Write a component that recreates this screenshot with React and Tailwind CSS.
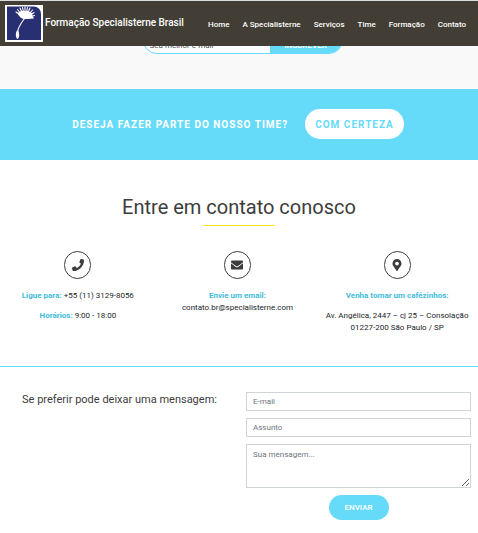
import { FaPhone, FaEnvelope, FaMapMarkerAlt } from "react-icons/fa";

const links = ["Home", "A Specialisterne", "Serviços", "Time", "Formação", "Contato"];

function Logo() {
  const seeds = [
    [11, 7], [12.5, 4.5], [15, 3], [17.5, 2.5], [20, 2], [22.5, 2.5], [25, 3], [27.5, 5], [29, 7.5], [29.5, 10.5], [28.5, 13],
  ];
  return (
    <svg viewBox="0 0 38 37" className="h-[37px] w-[38px] shrink-0" aria-hidden="true">
      <rect width="38" height="37" fill="#fff" />
      <path d="M2 1.500H29Q36 2.500 36 9V35H2Z" fill="#292f73" />
      <path d="M20 13C17 17 13 21 12.500 28" fill="none" stroke="#fff" strokeWidth="1.100" />
      <path d="M12 25.500C10.300 28 10.500 33 12.500 34C14.800 33 14.500 28 13 25.500Z" fill="#fff" />
      <g stroke="#fff" strokeWidth="1.100" strokeLinecap="round">
        {seeds.map(([x, y]) => (
          <path key={x} d={`M20 13.500L${x} ${y}`} />
        ))}
      </g>
      <path d="M12.500 8Q15 14 20 14L28 13L27 8L23 6L20 6L16 6Z" fill="#fff" />
    </svg>
  );
}

function Contact({ icon: Icon, children }) {
  return (
    <div className="flex flex-col items-center">
      <span className="mb-[11px] flex h-7 w-[27px] items-center justify-center rounded-full border border-[#3d3d3d] text-[#3d3d3d]">
        <Icon size={12} />
      </span>
      {children}
    </div>
  );
}

export default function App() {
  const field =
    "block w-full border border-[#ced4da] bg-white px-1.5 text-[8px] leading-3 text-[#495057] placeholder:text-[#6c757d] outline-none";
  return (
    <div className="min-h-screen overflow-x-clip bg-white font-[Roboto,sans-serif] text-[8px] leading-3 text-[#212529]">
      <header className="sticky top-0 z-10 flex h-[46px] items-center border-t border-[#d9dcdc] bg-[#423e35] pr-3 pl-[5px] text-white">
        <a href="#home" className="flex items-center gap-0.5 text-[10px] font-medium">
          <Logo />
          <span className="pb-0.5 whitespace-nowrap">Formação Specialisterne Brasil</span>
        </a>
        <nav className="ml-auto flex gap-[13px] pt-0.5 font-medium whitespace-nowrap">
          {links.map((l) => (
            <a key={l} href="#contato">{l}</a>
          ))}
        </nav>
      </header>

      <section className="-mt-5 bg-[#f9f9f9] pb-[35px] pl-[7px]">
        <form className="mx-auto flex h-7 w-[200px] overflow-hidden rounded-full border border-[#66dbf9] bg-white">
          <input aria-label="Seu melhor e-mail" placeholder="Seu melhor e-mail" className="min-w-0 flex-1 px-1.5 pt-3 placeholder:text-[#495057] outline-none" />
          <button type="button" className="w-[72px] bg-[#66dbf9] pt-3 font-bold text-white">INSCREVER</button>
        </form>
      </section>

      <section className="flex items-center justify-center gap-[17px] bg-[#66dbf9] pt-5 pr-0.5 pb-[21px] text-[10px] font-bold">
        <h2 className="pt-0.5 tracking-[1px] text-white">DESEJA FAZER PARTE DO NOSSO TIME?</h2>
        <button type="button" className="h-[30px] rounded-full bg-white px-2.5 pt-0.5 tracking-[1px] text-[#66dbf9]">COM CERTEZA</button>
      </section>

      <section className="border-b border-[#66dbf9] pt-[34px] pb-8">
        <h2 className="text-center text-xl leading-[26px] text-[#3d3d3d]">Entre em contato conosco</h2>
        <div className="mx-auto mt-[5px] h-px w-[72px] bg-[#ffe812]" />
        <div className="mt-[25px] mr-px -ml-0.5 grid grid-cols-3 text-center whitespace-nowrap">
          <Contact icon={FaPhone}>
            <p className="mb-2"><strong className="font-bold text-[#3fbbdb]">Ligue para:</strong> +55 (11) 3129-8056</p>
            <p><strong className="font-bold text-[#3fbbdb]">Horários:</strong> 9:00 - 18:00</p>
          </Contact>
          <Contact icon={FaEnvelope}>
            <p><strong className="font-bold text-[#3fbbdb]">Envie um email:</strong><br />contato.br@specialisterne.com</p>
          </Contact>
          <Contact icon={FaMapMarkerAlt}>
            <p className="mb-2"><strong className="font-bold text-[#3fbbdb]">Venha tomar um cafézinhos:</strong></p>
            <p>Av. Angélica, 2447 – cj 25 – Consolação<br />01227-200 São Paulo / SP</p>
          </Contact>
        </div>
      </section>

      <section className="grid grid-cols-2 gap-3.5 px-[7px] pt-[25px]">
        <h3 className="pt-px text-center text-[11px] leading-[14px] whitespace-nowrap text-[#3d3d3d]">Se preferir pode deixar uma mensagem:</h3>
        <form className="flex flex-col gap-[7px]">
          <input type="email" aria-label="E-mail" placeholder="E-mail" className={`${field} h-[19px]`} />
          <input aria-label="Assunto" placeholder="Assunto" className={`${field} h-[19px]`} />
          <textarea aria-label="Sua mensagem" placeholder="Sua mensagem..." className={`${field} h-11 resize py-1`} />
          <button type="button" className="h-[25px] w-[60px] self-center rounded-full bg-[#66dbf9] font-medium text-white">ENVIAR</button>
        </form>
      </section>
    </div>
  );
}
